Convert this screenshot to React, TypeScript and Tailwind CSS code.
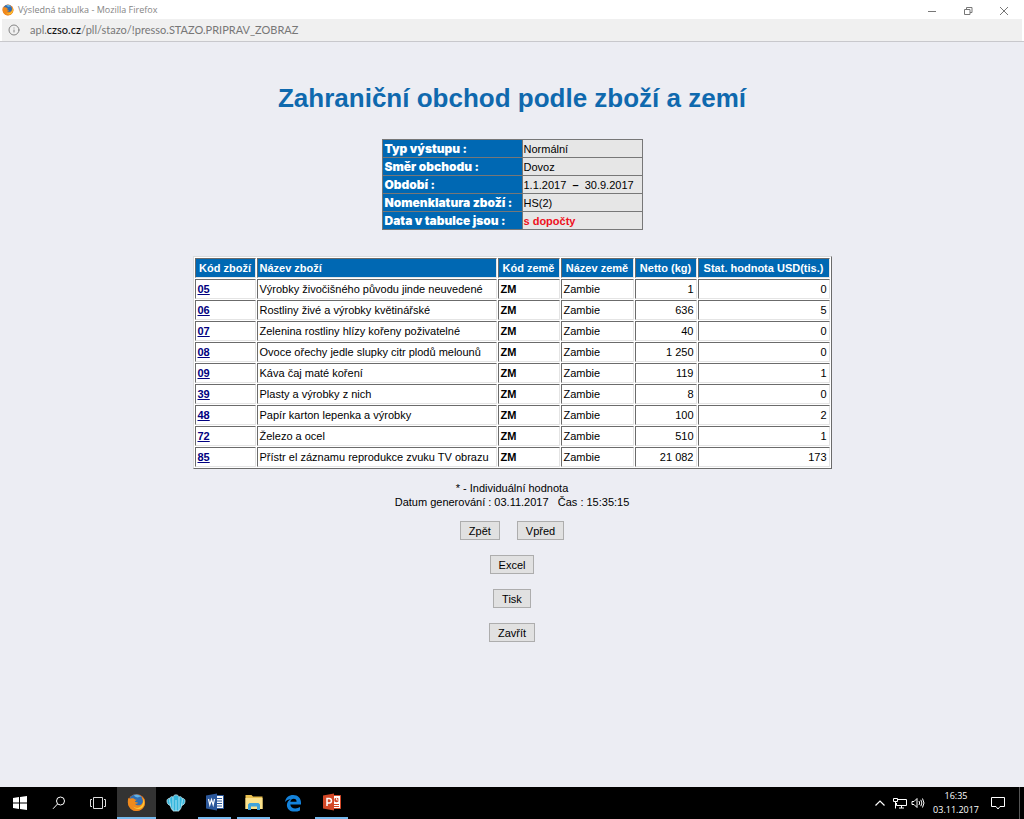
import React from 'react';
import { Info } from 'lucide-react';

interface Row {
  code: string;
  name: string;
  netto: string;
  usd: string;
}

const rows: Row[] = [
  { code: '05', name: 'Výrobky živočišného původu jinde neuvedené', netto: '1', usd: '0' },
  { code: '06', name: 'Rostliny živé a výrobky květinářské', netto: '636', usd: '5' },
  { code: '07', name: 'Zelenina rostliny hlízy kořeny poživatelné', netto: '40', usd: '0' },
  { code: '08', name: 'Ovoce ořechy jedle slupky citr plodů melounů', netto: '1 250', usd: '0' },
  { code: '09', name: 'Káva čaj maté koření', netto: '119', usd: '1' },
  { code: '39', name: 'Plasty a výrobky z nich', netto: '8', usd: '0' },
  { code: '48', name: 'Papír karton lepenka a výrobky', netto: '100', usd: '2' },
  { code: '72', name: 'Železo a ocel', netto: '510', usd: '1' },
  { code: '85', name: 'Přístr el záznamu reprodukce zvuku TV obrazu', netto: '21 082', usd: '173' },
];

const params = [
  { label: 'Typ výstupu :', value: 'Normální' },
  { label: 'Směr obchodu :', value: 'Dovoz' },
  { label: 'Období :', value: <>1.1.2017 &nbsp;<b>–</b>&nbsp; 30.9.2017</> },
  { label: 'Nomenklatura zboží :', value: 'HS(2)' },
  { label: 'Data v tabulce jsou :', value: <b className="text-[#ee1020]">s dopočty</b> },
];

const FirefoxIcon: React.FC<{ className?: string }> = ({ className }) => (
  <svg viewBox="0 0 20 20" className={className} aria-hidden="true">
    <circle cx="10" cy="10" r="9" fill="#e8701a" />
    <circle cx="9.5" cy="8.5" r="7.2" fill="#2f6fb5" />
    <path d="M7 2.500c3-1.600 7-.6 8.500 2-1.500-.7-3-.5-4 .3-1.500-.3-3-1-4.500-2.300z" fill="#63b3e4" />
    <path d="M1.500 5c-1.500 5-.5 10 4 12.800 5 2.700 11 .5 13-4.800 1-3 .4-6.500-1.500-8.500.8 3 .2 6-2 7.500-2.500 1.700-5.500 1-6.500-.8 1.500.5 2.600 0 3.300-.9-1.500.1-2.300-.9-3.600-1 .1-1 1.500-1.300 2-2.100-1.200-.1-2.300-.5-3-1.500C5 5.500 3.500 5.500 2.600 6.300 2 5.800 1.800 5.400 1.500 5z" fill="#f08a1d" />
    <path d="M15.500 4c2.500 3 2 8-1 10.300-2.500 2-6 1.700-8-.3 2 3.500 7 4 10 .8 2.400-2.800 2.200-7.600-1-10.800z" fill="#fdc934" />
  </svg>
);

const WindowControls = () => (
  <div className="flex h-full items-center pr-0.5 text-[#777]">
    <button aria-label="Minimalizovat" className="flex w-9 justify-center">
      <svg viewBox="0 0 10 10" className="size-2.5" stroke="currentColor" fill="none"><path d="M1 5.500h8" /></svg>
    </button>
    <button aria-label="Obnovit" className="flex w-9 justify-center">
      <svg viewBox="0 0 10 10" className="size-2.5" stroke="currentColor" fill="none"><path d="M1.500 3.500h5.500v5h-5.500zM3.500 3.500v-2h5.500v5h-2" /></svg>
    </button>
    <button aria-label="Zavřít okno" className="flex w-9 justify-center">
      <svg viewBox="0 0 10 10" className="size-2.5" stroke="currentColor" fill="none"><path d="M1 1l8 8M9 1l-8 8" /></svg>
    </button>
  </div>
);

const BrowserChrome = () => (
  <header className="bg-white">
    <div className="flex h-[19px] items-center justify-between">
      <div className="flex items-center gap-1 pl-0.5">
        <FirefoxIcon className="size-3" />
        <span className="font-['Open_Sans','Noto_Sans',sans-serif] text-[9px] leading-4 text-[#858585]">
          Výsledná tabulka - Mozilla Firefox
        </span>
      </div>
      <div className="h-full pt-0.5">
        <WindowControls />
      </div>
    </div>
    <div className="mx-0.5 flex h-[22px] items-center bg-[#f0f0f0] pl-1.5">
      <Info className="size-3 text-[#777]" strokeWidth={1.8} />
      <span className="ml-2.5 font-['Lato','Open_Sans',sans-serif] text-[11px] leading-4 text-[#777]">
        apl.<span className="font-medium text-[#111]">czso.cz</span>/pll/stazo/!presso.STAZO.PRIPRAV_ZOBRAZ
      </span>
    </div>
    <div className="h-px bg-[#c8c8cc]" />
  </header>
);

const ParamTable = () => (
  <table className="border-collapse border border-[#444] text-[11px] leading-4">
    <tbody>
      {params.map((p) => (
        <tr key={p.label} className="h-[18px]">
          <th scope="row" className="w-[140px] border border-[#777] bg-[#0068b3] px-0.5 text-left font-['Inter','Liberation_Sans',sans-serif] text-[12px] font-black whitespace-nowrap text-white">
            {p.label}
          </th>
          <td className="w-[120px] border border-[#777] bg-[#e6e6e6] px-px whitespace-nowrap">{p.value}</td>
        </tr>
      ))}
    </tbody>
  </table>
);

const bevel = 'border border-t-[#6b6b6b] border-l-[#6b6b6b] border-r-[#e4e4e4] border-b-[#e4e4e4] px-0.5 whitespace-nowrap';
const head = `${bevel} bg-[#0068b3] font-bold text-white`;
const cell = `${bevel} bg-white`;

const GoodsTable = () => (
  <table className="border-separate border-spacing-px border border-t-[#dcdcdc] border-r-[#6b6b6b] border-b-[#6b6b6b] border-l-[#dcdcdc] bg-white text-[11px] leading-[18px]">
    <thead>
      <tr>
        <th scope="col" className={`${head} w-[61px]`}>Kód zboží</th>
        <th scope="col" className={`${head} w-60 text-left`}>Název zboží</th>
        <th scope="col" className={`${head} w-[62px]`}>Kód země</th>
        <th scope="col" className={`${head} w-[73px]`}>Název země</th>
        <th scope="col" className={`${head} w-[62px]`}>Netto (kg)</th>
        <th scope="col" className={`${head} w-[132px]`}>Stat. hodnota USD(tis.)</th>
      </tr>
    </thead>
    <tbody>
      {rows.map((row) => (
        <tr key={row.code}>
          <td className={cell}>
            <a href={`#${row.code}`} className="font-bold text-[#000080] underline">{row.code}</a>
          </td>
          <td className={cell}>{row.name}</td>
          <td className={`${cell} font-bold`}>ZM</td>
          <td className={cell}>Zambie</td>
          <td className={`${cell} text-right`}>{row.netto}</td>
          <td className={`${cell} text-right`}>{row.usd}</td>
        </tr>
      ))}
    </tbody>
  </table>
);

const FormButton: React.FC<{ children: React.ReactNode }> = ({ children }) => (
  <button className="h-[19px] border border-[#adadad] bg-[#e1e1e1] px-2 text-[11px] leading-4">
    {children}
  </button>
);

const WordIcon = () => (
  <svg viewBox="0 0 20 18" className="h-[18px] w-5" aria-hidden="true">
    <path d="M10 2.500h8.500v13H10z" fill="#fff" stroke="#2b579a" />
    <path d="M12 5.500h5M12 8h5M12 10.500h5M12 13h5" stroke="#2b579a" />
    <path d="M1 2.500L12 .5v17L1 15.500z" fill="#2b579a" />
    <path d="M3.500 6l1.300 6L6.500 6.500 8.200 12 9.500 6" fill="none" stroke="#fff" strokeWidth="1.200" />
  </svg>
);

const FolderIcon = () => (
  <svg viewBox="0 0 20 18" className="h-[18px] w-5" aria-hidden="true">
    <path d="M1.500 2h6l1.500 1.500h9.500V16h-17z" fill="#e9bf4f" />
    <path d="M1.500 5h17v11h-17z" fill="#fbe28c" />
    <path d="M4 17V11.500L5.500 10h9l1.500 1.500V17h-3v-3.500H7V17z" fill="#3fa3dc" />
  </svg>
);

const PowerPointIcon = () => (
  <svg viewBox="0 0 20 18" className="h-[18px] w-5" aria-hidden="true">
    <path d="M10 2.500h8.500v13H10z" fill="#fff" stroke="#d24726" />
    <circle cx="14.500" cy="7" r="2.300" fill="#d24726" />
    <path d="M14.500 7V4.500M14.500 7H17" stroke="#fff" strokeWidth=".8" />
    <path d="M12 11.500h5M12 13.500h5" stroke="#d24726" />
    <path d="M1 2.500L12 .5v17L1 15.500z" fill="#d24726" />
    <path d="M5 13V5.500h2.200a2 2 0 010 4.500H5" fill="none" stroke="#fff" strokeWidth="1.500" />
  </svg>
);

const EdgeIcon = () => (
  <svg viewBox="0 0 18 18" className="size-[18px]" aria-hidden="true">
    <path d="M1 8C1.600 3.500 5 1 9.200 1 14 1 17 4.300 17 8.700v1.800H6.300c.2 2.700 2.500 3.900 5 3.900 1.800 0 3.300-.5 4.700-1.300v3.300c-1.600.8-3.400 1.200-5.500 1.200C6 17.600 2.900 15 2.900 11.200c0-2.800 1.500-4.900 4-6C4.200 5.200 2.200 6.300 1 8zm5.300-.2h6.300c0-1.900-1-3.100-2.900-3.100-1.800 0-3.100 1.200-3.400 3.100z" fill="#1483dc" />
  </svg>
);

const BlueIcon = () => (
  <svg viewBox="0 0 20 18" className="h-[18px] w-5" aria-hidden="true" fill="#35b6dc" stroke="#c9eef8" strokeWidth=".8">
    <path d="M5 11.500C2.500 11.500 1 9.500 1 7s2.500-3.300 4-1.500z" />
    <path d="M15 11.500c2.500 0 4-2 4-4.500s-2.500-3.300-4-1.500z" />
    <path d="M6.500 16c-1.500-1-2-3.500-2.300-6-.4-2.500-.7-4-.4-5.500.5-2.500 3.700-2.500 4 .3V16z" />
    <path d="M13.500 16c1.500-1 2-3.500 2.300-6 .4-2.500.7-4 .4-5.500-.5-2.500-3.700-2.500-4 .3V16z" />
    <path d="M7 17V3.500c0-3.500 6-3.500 6 0V17z" />
    <path d="M10 6v11" />
  </svg>
);

const taskButton = 'flex h-full w-[39px] items-center justify-center';

const Taskbar = () => (
  <footer className="flex h-8 items-stretch justify-between bg-black font-['Open_Sans','Noto_Sans',sans-serif] text-white">
    <div className="flex">
      <button aria-label="Start" className={taskButton}>
        <svg viewBox="0 0 14 14" className="size-3.5" fill="#fff"><path d="M0 2l6-.9v5.500H0zM7 1l7-1v6.600H7zM0 7.500h6V13l-6-.9zM7 7.500h7V14l-7-1z" /></svg>
      </button>
      <button aria-label="Hledat" className={taskButton}>
        <svg viewBox="0 0 14 14" className="size-3.5" fill="none" stroke="#fff"><circle cx="8.500" cy="5" r="4" /><path d="M5.500 8L1 12.800" /></svg>
      </button>
      <button aria-label="Zobrazení úloh" className={taskButton}>
        <svg viewBox="0 0 18 14" className="h-3.5 w-[18px]" fill="none" stroke="#ddd"><path d="M4.500 1.500h9v11h-9zM3 3.500H1.500v7H3M15 3.500h1.500v7H15" /></svg>
      </button>
      <button aria-label="Firefox" className={`${taskButton} border-b-2 border-[#76b9ed] bg-[#333]`}>
        <FirefoxIcon className="size-[19px]" />
      </button>
      <button aria-label="Aplikace" className={taskButton}><BlueIcon /></button>
      <div className="flex w-[39px] px-[3px]">
        <button aria-label="Word" className="flex flex-1 items-center justify-center border-b-2 border-[#76b9ed]"><WordIcon /></button>
      </div>
      <div className="flex w-[39px] px-[3px]">
        <button aria-label="Průzkumník" className="flex flex-1 items-center justify-center border-b-2 border-[#76b9ed]"><FolderIcon /></button>
      </div>
      <button aria-label="Edge" className={taskButton}><EdgeIcon /></button>
      <div className="flex w-[39px] px-[3px]">
        <button aria-label="PowerPoint" className="flex flex-1 items-center justify-center border-b-2 border-[#76b9ed]"><PowerPointIcon /></button>
      </div>
    </div>
    <div className="flex items-center">
      <button aria-label="Skryté ikony" className="mr-2">
        <svg viewBox="0 0 10 10" className="size-2.5" fill="none" stroke="#fff" strokeWidth="1.200"><path d="M.5 7.500L5 3l4.500 4.500" /></svg>
      </button>
      <button aria-label="Síť" className="mr-1">
        <svg viewBox="0 0 14 12" className="h-3 w-3.5" fill="none" stroke="#fff"><path d="M5 2.500h8.500v6H3.500V6M.5 1.500h4v3h-4zM2.500 4.500v7M6 11h5M8.500 8.500V11" /></svg>
      </button>
      <button aria-label="Hlasitost" className="mr-2">
        <svg viewBox="0 0 14 12" className="h-3 w-3.5" fill="none" stroke="#fff"><path d="M1 4.500h2L6 1.500v9l-3-3H1zM8 4q1.300 2 0 4M9.800 2.800q2.200 3.200 0 6.400M11.500 1.500q3 4.500 0 9" /></svg>
      </button>
      <div className="text-center text-[9px] leading-[14px]">
        <div>16:35</div>
        <div>03.11.2017</div>
      </div>
      <button aria-label="Oznámení" className="mr-3.5 ml-3">
        <svg viewBox="0 0 14 14" className="size-3.5" fill="none" stroke="#fff"><path d="M.5 1.500h13v9H9L7 13 5 10.500H.5z" /></svg>
      </button>
      <div className="mr-1 h-full w-px bg-[#555]" />
    </div>
  </footer>
);

export default function App() {
  return (
    <div className="flex min-h-screen flex-col bg-[#ecedf3] font-['Liberation_Sans',Arial,sans-serif] text-black">
      <BrowserChrome />
      <main className="flex flex-1 flex-col items-center">
        <h1 className="mt-10 text-[26px] leading-8 font-bold text-[#0f69ae]">
          Zahraniční obchod podle zboží a zemí
        </h1>
        <div className="mt-[25px]">
          <ParamTable />
        </div>
        <div className="mt-[26px]">
          <GoodsTable />
        </div>
        <div className="mt-3 text-center text-[11px] leading-[14px]">
          <p>* - Individuální hodnota</p>
          <p>Datum generování : 03.11.2017 &nbsp; Čas : 15:35:15</p>
        </div>
        <div className="mt-3 flex flex-col items-center gap-[15px]">
          <div className="flex gap-[17px]">
            <FormButton>Zpět</FormButton>
            <FormButton>Vpřed</FormButton>
          </div>
          <FormButton>Excel</FormButton>
          <FormButton>Tisk</FormButton>
          <FormButton>Zavřít</FormButton>
        </div>
      </main>
      <Taskbar />
    </div>
  );
}
